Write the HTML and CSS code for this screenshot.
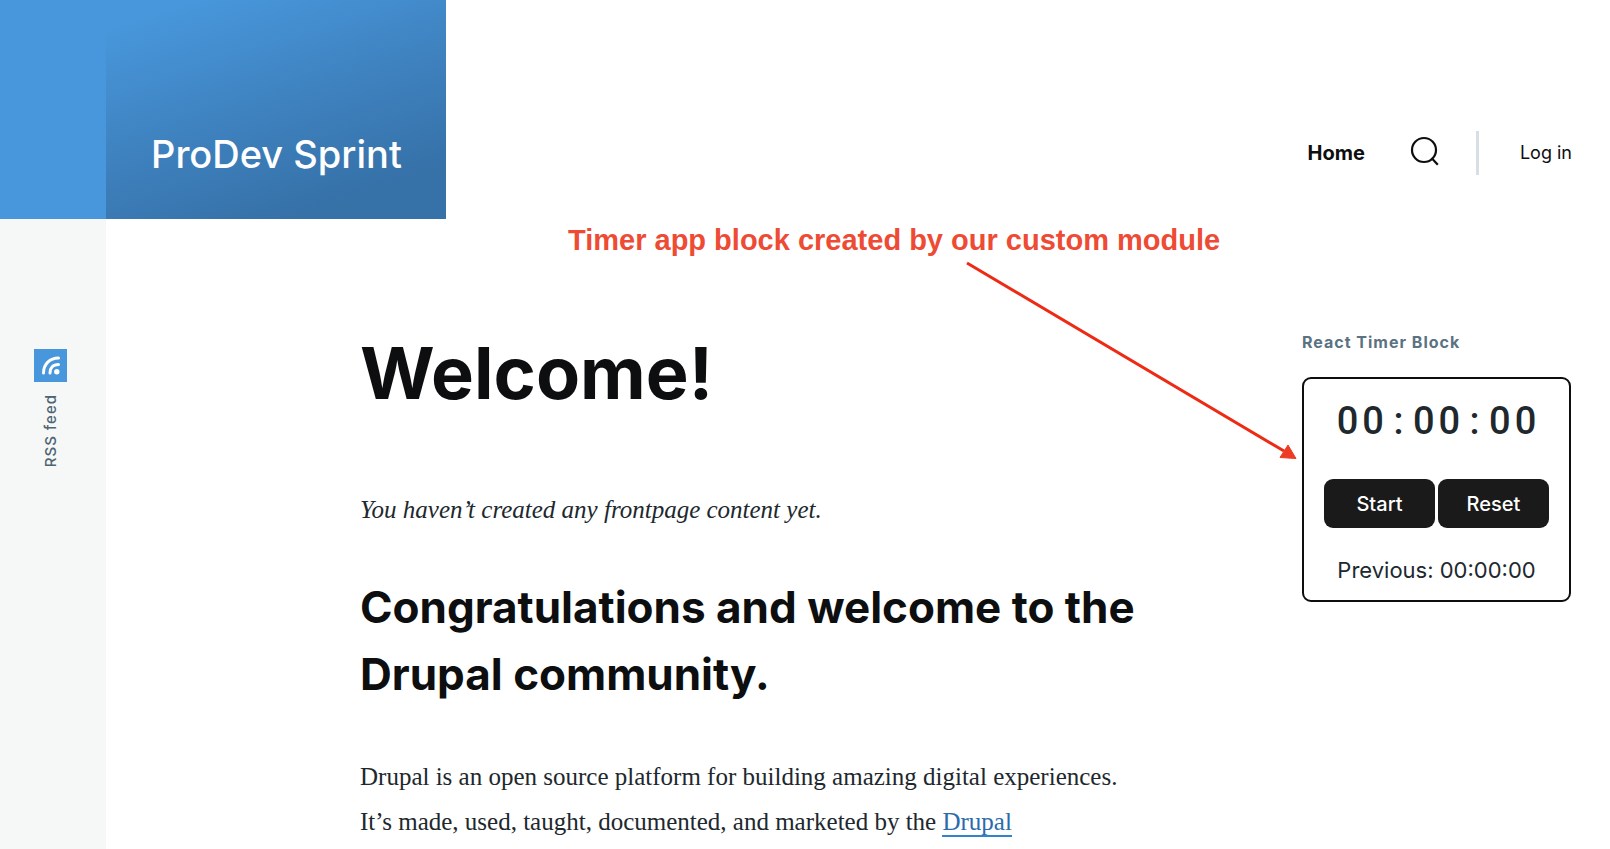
FILE: index.html
```html
<!DOCTYPE html>
<html lang="en">
<head>
<meta charset="utf-8">
<meta name="viewport" content="width=device-width, initial-scale=1">
<title>Welcome! | ProDev Sprint</title>
<link rel="stylesheet" href="styles.css">
</head>
<body>
<div class="site">
  <aside class="rail">
    <div class="rail-top"></div>
    <a class="rss" href="#rss">
      <svg class="rss-icon" viewBox="0 0 33 33" aria-hidden="true">
        <g fill="none" stroke="#fff" stroke-width="3" stroke-linecap="round">
          <path d="M9.500 24C9.500 15 16 9 24.500 9"/>
          <path d="M16 24C16 19 19 15.500 24.500 15.500"/>
        </g>
        <circle cx="22.800" cy="22.800" r="2.700" fill="#fff"/>
      </svg>
      <span class="rss-label">RSS feed</span>
    </a>
  </aside>
  <div class="page">
    <header class="header">
      <a class="brand" href="#home">ProDev Sprint</a>
      <nav class="nav" aria-label="Main">
        <a class="nav-home" href="#home">Home</a>
        <button class="nav-search" type="button" aria-label="Search">
          <svg viewBox="0 2 30 30" aria-hidden="true"><g fill="none" stroke="#0d0e10" stroke-width="2.200"><circle cx="14" cy="14" r="12"/><path d="M21.500 22L27.800 28.800"/></g></svg>
        </button>
        <a class="nav-login" href="#login">Log in</a>
      </nav>
    </header>
    <div class="columns">
      <main class="content">
        <h1>Welcome!</h1>
        <p><em>You haven’t created any frontpage content yet.</em></p>
        <h2>Congratulations and welcome to the Drupal community.</h2>
        <p>Drupal is an open source platform for building amazing digital experiences. It’s made, used, taught, documented, and marketed by the <a href="#drupal">Drupal</a></p>
      </main>
      <aside class="sidebar">
        <h2 class="block-title">React Timer Block</h2>
        <section class="timer">
          <div class="timer-value">00<span class="timer-colon">:</span>00<span class="timer-colon">:</span>00</div>
          <div class="timer-actions">
            <button type="button">Start</button>
            <button type="button">Reset</button>
          </div>
          <div class="timer-previous">Previous: 00:00:00</div>
        </section>
      </aside>
    </div>
  </div>
  <div class="note">
    <p class="note-text">Timer app block created by our custom module</p>
    <svg class="note-arrow" viewBox="0 0 332 200" aria-hidden="true">
      <path d="M1 2L318 190" stroke="#ed2b14" stroke-width="3" fill="none"/>
      <path d="M322 184L330 197.500L314 196.500Z" fill="#ee3c24" stroke="#ee3c24"/>
    </svg>
  </div>
</div>
</body>
</html>
```
FILE: styles.css
```css
* {
  box-sizing: border-box;
}

body {
  margin: 0;
  background: #fff;
  color: #20282e;
  font-family: Inter, "Liberation Sans", sans-serif;
  overflow: hidden;
}

.site {
  position: relative;
  display: grid;
  grid-template-columns: 106px minmax(0, 1fr);
  min-height: 100vh;
}

.rail {
  display: flex;
  flex-direction: column;
  background: #f5f8f7;
}

.rail-top {
  height: 219px;
  background: #4897dc;
}

.rss {
  display: flex;
  flex-direction: column;
  align-items: center;
  gap: 12px;
  padding-top: 130px;
  padding-right: 5px;
  color: #4f6473;
  font-size: 15px;
  font-weight: 500;
  letter-spacing: 1px;
  text-decoration: none;
}

.rss-icon {
  width: 33px;
  height: 33px;
  background: #4897dc;
}

.rss-label {
  writing-mode: vertical-rl;
  transform: rotate(180deg);
}

.header {
  display: flex;
  justify-content: space-between;
  height: 219px;
  padding-right: 38px;
}

.brand {
  display: flex;
  align-items: flex-end;
  min-width: 340px;
  padding: 0 44px 41px 45px;
  background: linear-gradient(162deg, #4897dc 8%, #3f83c1 46%, #3671a8 84%);
  color: #fff;
  font-size: 38px;
  line-height: 48px;
  font-weight: 500;
  text-decoration: none;
  white-space: nowrap;
}

.nav {
  display: flex;
  align-items: center;
  height: 44px;
  margin-top: 131px;
  color: #0d0e10;
}

.nav a {
  color: inherit;
  text-decoration: none;
}

.nav-home {
  font-size: 20px;
  line-height: 44px;
  font-weight: 700;
}

.nav-search {
  width: 30px;
  height: 30px;
  margin: 0 36px 0 45px;
  padding: 0;
  border: 0;
  background: none;
}

.nav-search svg {
  display: block;
  overflow: visible;
}

.nav-login {
  padding-left: 41px;
  border-left: 3px solid #d7dfe4;
  font-size: 18px;
  line-height: 44px;
}

.columns {
  display: grid;
  grid-template-columns: minmax(0, 790px) 269px;
  justify-content: space-between;
  padding: 110px 39px 0 254px;
}

.content h1 {
  margin: 0;
  color: #0d0e10;
  font-size: 72px;
  line-height: 88px;
  font-weight: 700;
}

.content p {
  margin: 0;
  font-family: "Liberation Serif", serif;
  font-size: 25px;
  line-height: 45px;
}

.content h1 + p {
  margin-top: 70px;
}

.content h2 {
  margin: 42px 0 46px;
  color: #0d0e10;
  font-size: 44px;
  line-height: 67px;
  font-weight: 700;
}

.content p a {
  color: #2a6cab;
  text-decoration: none;
  border-bottom: 2px solid #2f83cf;
}

.block-title {
  margin: 0 0 22px;
  color: #5a7282;
  font-size: 16px;
  line-height: 26px;
  font-weight: 700;
  letter-spacing: 1px;
}

.timer {
  padding: 20px 20px 15px;
  border: 2px solid #0d0e10;
  border-radius: 9px;
  text-align: center;
}

.timer-value {
  padding-left: 4px;
  font-family: Roboto, sans-serif;
  font-size: 38px;
  line-height: 44px;
  font-weight: 500;
  letter-spacing: 4px;
  white-space: nowrap;
}

.timer-colon {
  display: inline-block;
  width: 25px;
}

.timer-actions {
  display: grid;
  grid-template-columns: 1fr 1fr;
  gap: 3px;
  margin: 36px 0 27px;
}

.timer-actions button {
  height: 49px;
  padding: 0;
  border: 0;
  border-radius: 9px;
  background: #1a1a1a;
  color: #fff;
  font: 500 20px Inter, sans-serif;
}

.timer-previous {
  font-size: 22px;
  line-height: 30px;
  white-space: nowrap;
}

.note {
  position: absolute;
  top: 223px;
  left: 568px;
  color: #ee4b35;
  pointer-events: none;
}

.note-text {
  margin: 0;
  font: 700 29px/34px "Liberation Sans", sans-serif;
  white-space: nowrap;
}

.note-arrow {
  display: block;
  width: 332px;
  height: 200px;
  margin: 4px 0 0 398px;
}
```
